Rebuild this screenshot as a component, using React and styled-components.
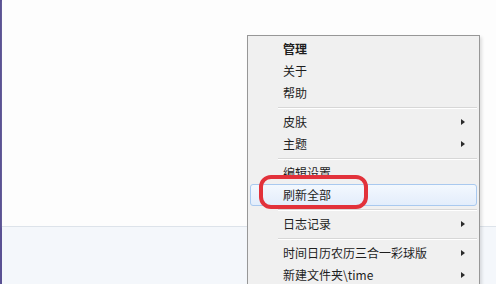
import React from 'react';
import styled, { createGlobalStyle } from 'styled-components';

const GlobalStyle = createGlobalStyle`
    html, body {
        margin: 0;
        padding: 0;
        background: #fdfdfd;
    }
    body {
        font-family: "Noto Sans CJK SC", "Noto Sans", sans-serif;
    }
`;

const Screen = styled.div`
    position: relative;
    width: 496px;
    height: 284px;
    overflow: hidden;
    display: flex;
    background: #fdfdfd;
`;

const LeftEdge = styled.div`
    width: 2px;
    background: #5a5193;
`;

const Window = styled.div`
    flex: 1;
    display: flex;
    flex-direction: column;
`;

const Upper = styled.div`
    height: 226px;
    background: #fdfdfd;
    border-bottom: 1px solid #dde3ea;
    box-shadow: 0 1px 2px rgba(180, 190, 205, 0.35);
`;

const Lower = styled.div`
    flex: 1;
    background: #f4f7fb;
`;

const Menu = styled.div`
    position: absolute;
    left: 247px;
    top: 35px;
    width: 229px;
    height: 270px;
    background: #f0f0f0;
    border: 1px solid #979797;
    box-shadow: 2px 2px 3px rgba(0, 0, 0, 0.12);
    padding: 2px 1px;
`;

const Item = styled.div`
    position: relative;
    height: 22px;
    margin: 0 1px;
    padding-left: 32px;
    display: flex;
    align-items: center;
    font-size: 12px;
    line-height: 22px;
    color: #1e1e1e;
    font-weight: ${(p) => (p.bold ? 700 : 400)};
    border: 1px solid ${(p) => (p.active ? '#a9c9ef' : 'transparent')};
    border-radius: 3px;
    box-sizing: border-box;
    background: ${(p) =>
        p.active ? 'linear-gradient(to bottom, #f3f8fe, #e3edfb)' : 'transparent'};
`;

const Arrow = styled.span`
    position: absolute;
    right: 11px;
    top: 7px;
    width: 0;
    height: 0;
    border-left: 4px solid #2b2b2b;
    border-top: 3.5px solid transparent;
    border-bottom: 3.5px solid transparent;
`;

const Separator = styled.div`
    height: 7px;
    margin-left: 29px;
    margin-right: 1px;
    display: flex;
    flex-direction: column;
    justify-content: center;

    &::before {
        content: '';
        display: block;
        height: 1px;
        background: #d7d7d7;
    }
    &::after {
        content: '';
        display: block;
        height: 1px;
        background: #ffffff;
    }
`;

const Mark = styled.div`
    position: absolute;
    left: 259px;
    top: 175px;
    width: 109px;
    height: 34px;
    box-sizing: border-box;
    border: 4px solid #e2323b;
    border-radius: 12px;
    pointer-events: none;
`;

const groups = [
    [{ label: '管理', bold: true }, { label: '关于' }, { label: '帮助' }],
    [{ label: '皮肤', sub: true }, { label: '主题', sub: true }],
    [{ label: '编辑设置' }, { label: '刷新全部', active: true }],
    [{ label: '日志记录', sub: true }],
    [{ label: '时间日历农历三合一彩球版', sub: true }, { label: '新建文件夹\\time', sub: true }],
];

function App() {
    return (
        <>
            <GlobalStyle />
            <Screen>
                <LeftEdge />
                <Window>
                    <Upper />
                    <Lower />
                </Window>
                <Menu>
                    {groups.map((group, gi) => (
                        <React.Fragment key={gi}>
                            {gi > 0 && <Separator />}
                            {group.map((item) => (
                                <Item key={item.label} bold={item.bold} active={item.active}>
                                    {item.label}
                                    {item.sub && <Arrow />}
                                </Item>
                            ))}
                        </React.Fragment>
                    ))}
                </Menu>
                <Mark />
            </Screen>
        </>
    );
}

export default App;
